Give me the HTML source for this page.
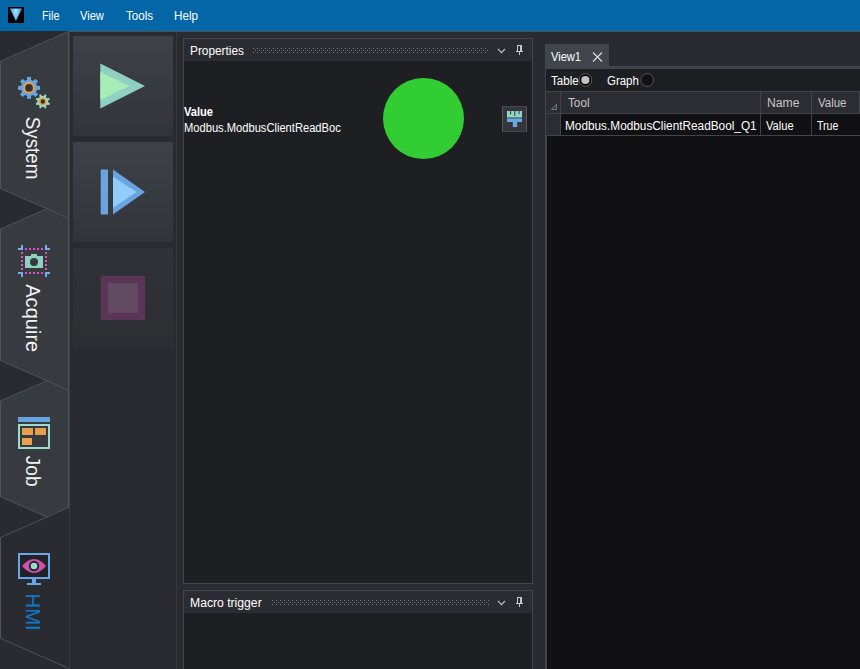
<!DOCTYPE html>
<html><head><meta charset="utf-8"><title>HMI</title>
<style>
html,body{margin:0;padding:0}
body{width:860px;height:669px;overflow:hidden;background:#2a2b30;position:relative;font-family:"Liberation Sans",sans-serif;font-size:12px;color:#fff}
.a{position:absolute}
.t{position:absolute;white-space:nowrap;line-height:14px;height:14px;transform-origin:0 0}
#title{left:0;top:0;width:860px;height:31px;background:#0466a7;border-bottom:1px solid #0369ae;box-sizing:border-box}
.btn{left:73px;width:100px;height:100px;background:linear-gradient(#3f4149,#32343a)}
.panel{border:1px solid #45464c;background:#1e1f22;box-sizing:border-box}
.ph{left:0;top:0;right:0;height:22px;background:#2b2c31}
svg{position:absolute;left:0;top:0;overflow:visible}
svg text{font-family:"Liberation Sans",sans-serif}
</style></head><body>
<div id="title" class="a"></div>
<div class="a" style="left:8px;top:7px;width:16px;height:16px;background:#000"></div>
<svg width="32" height="31" viewBox="0 0 32 31"><defs><radialGradient id="lg" gradientUnits="userSpaceOnUse" cx="15.9" cy="9.5" r="9" gradientTransform="translate(15.9 9.5) scale(0.45 1.3) translate(-15.9 -9.5)"><stop offset="0" stop-color="#b4e6ff"/><stop offset="1" stop-color="#4eb0f2"/></radialGradient></defs><path d="M9.9 8.6h12l-6 12.4z" fill="url(#lg)"/></svg>
<span class="t" style="left:42px;top:9px;transform:scaleX(0.900);">File</span>
<span class="t" style="left:80px;top:9px;transform:scaleX(0.926);">View</span>
<span class="t" style="left:126.4px;top:9px;transform:scaleX(0.964);">Tools</span>
<span class="t" style="left:174.4px;top:9px;transform:scaleX(0.972);">Help</span>

<div class="a" style="left:68px;top:31px;width:792px;height:1px;background:#4e4c51"></div>
<div class="a" style="left:176px;top:32px;width:1px;height:637px;background:#36373c"></div>
<div class="a" style="left:69px;top:32px;width:1px;height:637px;background:#393b41"></div>

<svg width="70" height="669" viewBox="0 0 70 669">
<polygon points="0.5,401 68.5,371.3 68.5,526.4 0.5,496.6" fill="#373a3f" stroke="#51535b" stroke-width="1"/>
<polygon points="0.5,229 68.5,199.3 68.5,390.2 0.5,360.4" fill="#373a3f" stroke="#51535b" stroke-width="1"/>
<polygon points="0.5,61.2 68.5,31.5 68.5,218.2 0.5,188.5" fill="#373a3f" stroke="#51535b" stroke-width="1"/>
<polygon points="0.5,537.5 68.5,507.4 69,507.4 69,668.3 0.5,638.3" fill="#2a2b30"/>
<path d="M68.5 507.4L0.5 537.5V638.3L68.5 668.3" fill="none" stroke="#51535b" stroke-width="1"/>

<g transform="translate(29.05 87.9)" fill="#68a4e0"><circle r="8.2"/><path d="M-2.0 -6.699999999999999L-2.0 -11.0H2.0L2.0 -6.699999999999999z" transform="rotate(0.0)"/><path d="M-2.0 -6.699999999999999L-2.0 -11.0H2.0L2.0 -6.699999999999999z" transform="rotate(45.0)"/><path d="M-2.0 -6.699999999999999L-2.0 -11.0H2.0L2.0 -6.699999999999999z" transform="rotate(90.0)"/><path d="M-2.0 -6.699999999999999L-2.0 -11.0H2.0L2.0 -6.699999999999999z" transform="rotate(135.0)"/><path d="M-2.0 -6.699999999999999L-2.0 -11.0H2.0L2.0 -6.699999999999999z" transform="rotate(180.0)"/><path d="M-2.0 -6.699999999999999L-2.0 -11.0H2.0L2.0 -6.699999999999999z" transform="rotate(225.0)"/><path d="M-2.0 -6.699999999999999L-2.0 -11.0H2.0L2.0 -6.699999999999999z" transform="rotate(270.0)"/><path d="M-2.0 -6.699999999999999L-2.0 -11.0H2.0L2.0 -6.699999999999999z" transform="rotate(315.0)"/></g><circle cx="29.05" cy="87.9" r="4.9" fill="#30333a" stroke="#f0a040" stroke-width="2.1"/><g transform="translate(42.8 101.4)" fill="#96dccc"><circle r="5.3"/><path d="M-1.7 -3.8L-0.7 -7.4H0.7L1.7 -3.8z" transform="rotate(22.5)"/><path d="M-1.7 -3.8L-0.7 -7.4H0.7L1.7 -3.8z" transform="rotate(67.5)"/><path d="M-1.7 -3.8L-0.7 -7.4H0.7L1.7 -3.8z" transform="rotate(112.5)"/><path d="M-1.7 -3.8L-0.7 -7.4H0.7L1.7 -3.8z" transform="rotate(157.5)"/><path d="M-1.7 -3.8L-0.7 -7.4H0.7L1.7 -3.8z" transform="rotate(202.5)"/><path d="M-1.7 -3.8L-0.7 -7.4H0.7L1.7 -3.8z" transform="rotate(247.5)"/><path d="M-1.7 -3.8L-0.7 -7.4H0.7L1.7 -3.8z" transform="rotate(292.5)"/><path d="M-1.7 -3.8L-0.7 -7.4H0.7L1.7 -3.8z" transform="rotate(337.5)"/></g><circle cx="42.8" cy="101.4" r="3.1" fill="#2c3038" stroke="#f0a040" stroke-width="1.7"/><g shape-rendering="crispEdges"><path fill="#6ab4f0" d="M21 245h2v5h-5v-2h3z M45 245h2v3h3v2h-5z M18 272h5v5h-2v-3h-3z M45 272h5v2h-3v3h-2z"/><rect x="25" y="248" width="2" height="2" fill="#e050c0"/><rect x="25" y="272" width="2" height="2" fill="#e050c0"/><rect x="21" y="252" width="2" height="2" fill="#e050c0"/><rect x="45" y="252" width="2" height="2" fill="#e050c0"/><rect x="29" y="248" width="2" height="2" fill="#e050c0"/><rect x="29" y="272" width="2" height="2" fill="#e050c0"/><rect x="21" y="256" width="2" height="2" fill="#e050c0"/><rect x="45" y="256" width="2" height="2" fill="#e050c0"/><rect x="33" y="248" width="2" height="2" fill="#e050c0"/><rect x="33" y="272" width="2" height="2" fill="#e050c0"/><rect x="21" y="260" width="2" height="2" fill="#e050c0"/><rect x="45" y="260" width="2" height="2" fill="#e050c0"/><rect x="37" y="248" width="2" height="2" fill="#e050c0"/><rect x="37" y="272" width="2" height="2" fill="#e050c0"/><rect x="21" y="264" width="2" height="2" fill="#e050c0"/><rect x="45" y="264" width="2" height="2" fill="#e050c0"/><rect x="41" y="248" width="2" height="2" fill="#e050c0"/><rect x="41" y="272" width="2" height="2" fill="#e050c0"/><rect x="21" y="268" width="2" height="2" fill="#e050c0"/><rect x="45" y="268" width="2" height="2" fill="#e050c0"/><path fill="#8fd0c3" d="M25 256h6v-2h6v2h6v12h-18z"/></g><circle cx="34" cy="262" r="4" fill="#37393e"/><g shape-rendering="crispEdges"><rect x="18" y="417" width="32" height="5" fill="#68a4e0"/><rect x="19" y="425" width="30" height="23" fill="none" stroke="#9adccc" stroke-width="2"/><rect x="22" y="428" width="11" height="7" fill="#e8a050"/><rect x="35" y="428" width="11" height="7" fill="#e8a050"/><rect x="22" y="438" width="10" height="7" fill="#e8a050"/></g><g shape-rendering="crispEdges"><rect x="19" y="554" width="30" height="24" fill="#222326" stroke="#68a8e8" stroke-width="2"/><rect x="32" y="579" width="4" height="4" fill="#68a8e8"/><rect x="27" y="583" width="14" height="2" fill="#68a8e8"/></g><path fill="#d050b0" d="M22 566 Q34 552 46 566 Q34 580 22 566z"/><circle cx="34" cy="566" r="5.2" fill="#222326"/><circle cx="34" cy="566" r="3.3" fill="#9adccc"/>
<text transform="translate(25.6 116.70) rotate(90) scale(0.918 1)" font-size="20.5" fill="#f2f2f2">System</text>
<text transform="translate(25.6 284.22) rotate(90) scale(0.98 1)" font-size="20.5" fill="#f2f2f2">Acquire</text>
<text transform="translate(25.6 455.78) rotate(90) scale(0.93 1)" font-size="20.5" fill="#f2f2f2">Job</text>
<text transform="translate(25.9 593.51) rotate(90) scale(0.99 1)" font-size="20.5" fill="#0a7acc">HMI</text>

</svg>

<div class="a btn" style="top:36px"></div>
<div class="a btn" style="top:142px"></div>
<div class="a btn" style="top:248px;background:linear-gradient(#313237,#2d2e32)"></div>
<svg width="180" height="360" viewBox="0 0 180 360">
<path d="M100.3 63.5L145 86L100.3 108.5z" fill="#8fd0c3"/><path d="M100.3 72L129.5 86L100.3 100z" fill="#a8ecb8"/>
<rect x="100.7" y="169.5" width="7.3" height="45" fill="#68a4e0"/>
<path d="M113 169.5L145 192L113 214.5z" fill="#68a4e0"/><path d="M113 176.7L136.7 192L113 207.7z" fill="#93cdfb"/>
<rect x="100.7" y="275.8" width="44.3" height="44.2" fill="#5a3558"/><rect x="108" y="283" width="30" height="30" fill="#634a63"/>
</svg>

<!-- Properties panel -->
<div class="a panel" style="left:183px;top:38px;width:350px;height:546px">
 <div class="a ph"></div>
</div>
<span class="t" style="left:190px;top:44px;transform:scaleX(0.985);">Properties</span>
<span class="t" style="left:184px;top:105px;transform:scaleX(0.925);font-weight:bold">Value</span>
<span class="t" style="left:184px;top:121px;transform:scaleX(0.929);">Modbus.ModbusClientReadBoc</span>
<div class="a" style="left:383.4px;top:78.4px;width:80.7px;height:80.8px;border-radius:50%;background:#32cd32"></div>
<div class="a" style="left:502px;top:106px;width:25px;height:26px;box-sizing:border-box;border:1px solid;border-color:#46484d #55575d;background:#35373c"></div>
<svg width="540" height="140" viewBox="0 0 540 140">
<path fill="#92d8c6" d="M507 111h3.1v3.4h1v-3.4h3.2v5h1v-5h3.2v3.2h1v-3.2h2.5v6.5h-15z"/>
<rect x="507" y="117.5" width="15" height="1.3" fill="#5f7f80"/>
<rect x="507" y="118.8" width="15" height="3.2" fill="#68a8e8"/><rect x="512.8" y="122" width="4.4" height="5" fill="#68a8e8"/>
</svg>

<!-- Macro trigger panel -->
<div class="a panel" style="left:183px;top:590px;width:350px;height:100px">
 <div class="a ph"></div>
</div>
<span class="t" style="left:190px;top:596px;transform:scaleX(1.014);">Macro trigger</span>

<svg width="540" height="669" viewBox="0 0 540 669">
<defs><pattern id="grip" x="253" y="48" width="4" height="4" patternUnits="userSpaceOnUse"><rect x="0" y="0" width="1" height="1" fill="#7c7d82"/><rect x="2" y="2" width="1" height="1" fill="#7c7d82"/></pattern>
<pattern id="grip2" x="272" y="600" width="4" height="4" patternUnits="userSpaceOnUse"><rect x="0" y="0" width="1" height="1" fill="#7c7d82"/><rect x="2" y="2" width="1" height="1" fill="#7c7d82"/></pattern></defs>
<g shape-rendering="crispEdges">
<rect x="253" y="48" width="235" height="5" fill="url(#grip)"/>
<rect x="272" y="600" width="217" height="5" fill="url(#grip2)"/>
</g>
<g fill="none" stroke="#bcbcbc" stroke-width="1.25">
<path d="M498 49L501.5 52.6L505 49"/>
<path d="M498 601L501.5 604.6L505 601"/>
</g>
<g fill="#c8c8c8" shape-rendering="crispEdges">
<path d="M517 45h5v6h1v1h-3v3h-1v-3h-3v-1h1zM518 46v5h2v-5z"/>
<path d="M517 597h5v6h1v1h-3v3h-1v-3h-3v-1h1zM518 598v5h2v-5z"/>
</g>
</svg>

<!-- View panel -->
<div class="a" style="left:545px;top:44px;width:63.5px;height:22px;background:#43454c"></div>
<div class="a" style="left:545px;top:66px;width:315px;height:3px;background:#43454c"></div>
<div class="a" style="left:545px;top:69px;width:315px;height:600px;background:#111113"></div>
<div class="a" style="left:545px;top:69px;width:1px;height:600px;background:#404248"></div>
<div class="a" style="left:546px;top:91px;width:1px;height:578px;background:#474950"></div>
<div class="a" style="left:546px;top:69px;width:314px;height:22px;background:#1e1f23"></div>
<span class="t" style="left:551.3px;top:50px;transform:scaleX(0.924);">View1</span>
<span class="t" style="left:551px;top:74px;transform:scaleX(0.964);">Table</span>
<span class="t" style="left:606.8px;top:74px;transform:scaleX(0.955);">Graph</span>
<!-- grid -->
<div class="a" style="left:546px;top:91px;width:314px;height:45px;background:#42444a"></div>
<div class="a" style="left:546px;top:92px;width:14px;height:21px;background:#2c2d32"></div>
<div class="a" style="left:561px;top:92px;width:199px;height:21px;background:#2c2d32"></div>
<div class="a" style="left:761px;top:92px;width:50px;height:21px;background:#2c2d32"></div>
<div class="a" style="left:812px;top:92px;width:47px;height:21px;background:#2c2d32"></div>
<div class="a" style="left:546px;top:114px;width:14px;height:21px;background:#2c2d32"></div>
<div class="a" style="left:561px;top:114px;width:199px;height:21px;background:#111113"></div>
<div class="a" style="left:761px;top:114px;width:50px;height:21px;background:#111113"></div>
<div class="a" style="left:812px;top:114px;width:48px;height:21px;background:#111113"></div>
<span class="t" style="left:567.5px;top:96px;transform:scaleX(0.977);color:#c8c8c8">Tool</span>
<span class="t" style="left:767px;top:96px;transform:scaleX(1.016);color:#c8c8c8">Name</span>
<span class="t" style="left:818.4px;top:96px;transform:scaleX(0.953);color:#c8c8c8">Value</span>
<span class="t" style="left:565px;top:119px;transform:scaleX(0.984);">Modbus.ModbusClientReadBool_Q1</span>
<span class="t" style="left:765.6px;top:119px;transform:scaleX(0.925);">Value</span>
<span class="t" style="left:816.5px;top:119px;transform:scaleX(0.880);">True</span>
<svg width="860" height="140" viewBox="0 0 860 140">
<path d="M593 52.5L602 61.5M602 52.5L593 61.5" stroke="#e0e0e0" stroke-width="1.1" fill="none"/>
<circle cx="585.35" cy="80" r="6.35" fill="#050506" stroke="#5c5e64" stroke-width="1"/><circle cx="585.35" cy="80" r="4.1" fill="#c2c2c2"/>
<circle cx="647.1" cy="80" r="6.35" fill="#121214" stroke="#55575d" stroke-width="1"/>
<path d="M551.3 109.5h5.2v-5.4z" fill="#3a3b40" stroke="#77787d" stroke-width="1"/>
</svg>
</body></html>
